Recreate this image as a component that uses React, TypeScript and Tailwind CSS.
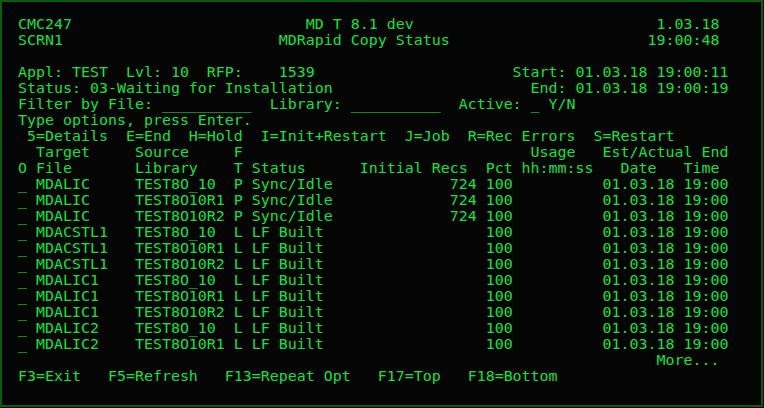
type Field = [number, string];

// 5250-style screen: every line is a list of fields placed at a column.
function compose(fields: Field[]): string {
  let line = "";
  for (const [col, text] of fields) {
    if (line.length < col) line = line.padEnd(col, " ");
    line = line.slice(0, col) + text + line.slice(col + text.length);
  }
  return line;
}

type CopyRow = { file: string; lib: string; ft: string; status: string; recs?: string };

const rows: CopyRow[] = [
  { file: "MDALIC", lib: "TEST8O_10", ft: "P", status: "Sync/Idle", recs: "724" },
  { file: "MDALIC", lib: "TEST8O10R1", ft: "P", status: "Sync/Idle", recs: "724" },
  { file: "MDALIC", lib: "TEST8O10R2", ft: "P", status: "Sync/Idle", recs: "724" },
  { file: "MDACSTL1", lib: "TEST8O_10", ft: "L", status: "LF Built" },
  { file: "MDACSTL1", lib: "TEST8O10R1", ft: "L", status: "LF Built" },
  { file: "MDACSTL1", lib: "TEST8O10R2", ft: "L", status: "LF Built" },
  { file: "MDALIC1", lib: "TEST8O_10", ft: "L", status: "LF Built" },
  { file: "MDALIC1", lib: "TEST8O10R1", ft: "L", status: "LF Built" },
  { file: "MDALIC1", lib: "TEST8O10R2", ft: "L", status: "LF Built" },
  { file: "MDALIC2", lib: "TEST8O_10", ft: "L", status: "LF Built" },
  { file: "MDALIC2", lib: "TEST8O10R1", ft: "L", status: "LF Built" },
];

const screen: Field[][] = [
  [[0, "CMC247"], [32, "MD T 8.1 dev"], [71, "1.03.18"]],
  [[0, "SCRN1"], [29, "MDRapid Copy Status"], [70, "19:00:48"]],
  [],
  [[0, "Appl: TEST  Lvl: 10  RFP:    1539"], [55, "Start: 01.03.18 19:00:11"]],
  [[0, "Status: 03-Waiting for Installation"], [57, "End: 01.03.18 19:00:19"]],
  [[0, "Filter by File: __________  Library: __________  Active: _ Y/N"]],
  [[0, "Type options, press Enter."]],
  [[1, "5=Details  E=End  H=Hold  I=Init+Restart  J=Job  R=Rec Errors  S=Restart"]],
  [[2, "Target"], [13, "Source"], [24, "F"], [57, "Usage"], [65, "Est/Actual End"]],
  [
    [0, "O"], [2, "File"], [13, "Library"], [24, "T"], [26, "Status"],
    [38, "Initial Recs"], [52, "Pct"], [56, "hh:mm:ss"], [67, "Date"], [74, "Time"],
  ],
  ...rows.map((r): Field[] => [
    [0, "_"], [2, r.file], [13, r.lib], [24, r.ft], [26, r.status],
    [51 - (r.recs ?? "").length, r.recs ?? ""],
    [52, "100"], [65, "01.03.18"], [74, "19:00"],
  ]),
  [[71, "More..."]],
  [[0, "F3=Exit"], [10, "F5=Refresh"], [23, "F13=Repeat Opt"], [40, "F17=Top"], [50, "F18=Bottom"]],
  [],
];

export default function App() {
  return (
    <div className="h-[408px] w-[764px] overflow-hidden bg-black">
      <div className="h-[407px] w-[763px] border-2 border-[#0c5c0c] bg-[#050505] pl-4 pt-[14px]">
        <pre className="font-['DejaVu_Sans_Mono','Liberation_Mono',monospace] text-[14.95px] leading-4 text-[#17e040]">
          {screen.map((fields, i) => (
            <div key={i} className="h-4 whitespace-pre">
              {compose(fields)}
            </div>
          ))}
        </pre>
      </div>
    </div>
  );
}
